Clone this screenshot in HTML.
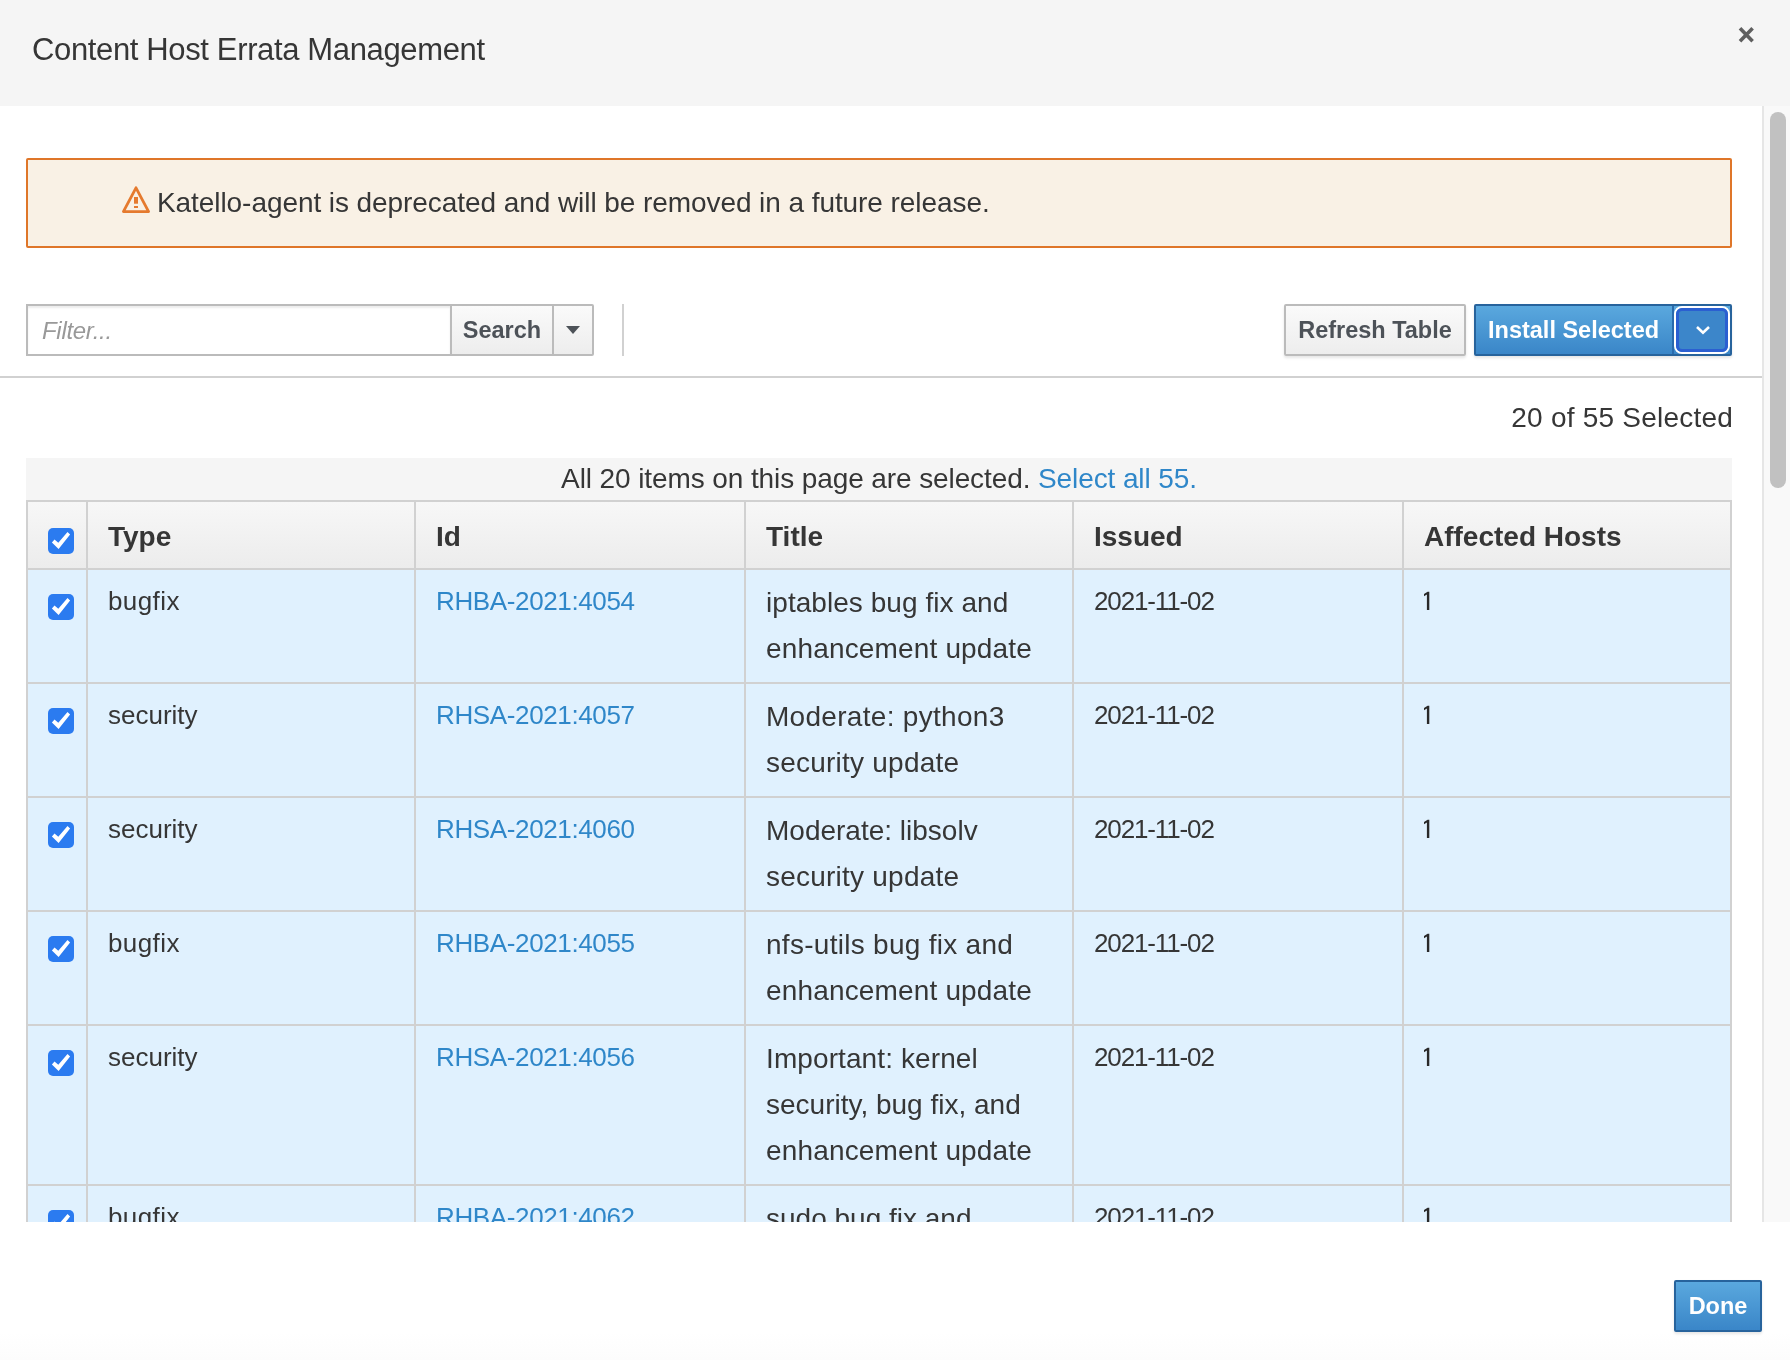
<!DOCTYPE html>
<html><head><meta charset="utf-8">
<style>
*{box-sizing:border-box;margin:0;padding:0}
html{background:#fff}
html,body{width:1790px;height:1360px;overflow:hidden;font-family:"Liberation Sans",sans-serif;color:#363636}
body{will-change:transform;position:relative}
.abs{position:absolute}
#hdr{left:0;top:0;width:1790px;height:106px;background:#f5f5f5}
#title{left:32px;top:30px;font-size:31px;letter-spacing:-0.36px;line-height:40px;color:#363636;white-space:nowrap}
#close{left:1736px;top:24px;width:20px;height:22px}
#body{left:0;top:106px;width:1762px;height:1116px;overflow:hidden;background:#fff}
#track{left:1762px;top:106px;width:28px;height:1116px;background:#f9f9f9;border-left:2px solid #e6e6e6}
#thumb{left:1770px;top:112px;width:16px;height:376px;background:#c1c1c1;border-radius:8px}
#foot{left:0;top:1222px;width:1790px;height:138px;background:linear-gradient(#fff 0,#fff 80%,#fcfcfc 100%)}
#alert{left:26px;top:52px;width:1706px;height:90px;border:2px solid #df7629;background:#f9f1e5;border-radius:2px}
#alert .txt{position:absolute;left:129px;top:27px;font-size:28px;line-height:32px;white-space:nowrap;color:#363636;letter-spacing:-0.07px}
#warn{position:absolute;left:93px;top:25px}
#filter{left:26px;top:198px;width:426px;height:52px;border:2px solid #bbb;background:#fff;box-shadow:inset 0 2px 2px rgba(0,0,0,.075)}
#filter span{position:absolute;left:14px;top:11px;font-style:italic;font-size:24px;line-height:28px;color:#999;letter-spacing:-0.3px}
.btn{position:absolute;border:2px solid #bbb;background:linear-gradient(#fafafa,#ededed);color:#4d5258;font-weight:bold;font-size:23.5px;line-height:48px;text-align:center;white-space:nowrap}
#search{left:450px;top:198px;width:104px;height:52px}
#caret{left:552px;top:198px;width:42px;height:52px;border-radius:0 2px 2px 0}
#vdiv{left:622px;top:198px;width:2px;height:52px;background:#d1d1d1}
#refresh{left:1284px;top:198px;width:182px;height:52px;border-radius:2px;box-shadow:0 2px 3px rgba(3,3,3,.1)}
#install{left:1474px;top:198px;width:258px;height:52px;border:2px solid #27639c;background:linear-gradient(#5aa8de,#3a86c8);color:#fff;border-radius:2px;text-align:left;box-shadow:0 2px 3px rgba(3,3,3,.1)}
#install .t{position:absolute;left:12px;top:0}
#install .sep{position:absolute;left:196px;top:0;width:2px;height:48px;background:#2a6aac}
#install .ring{position:absolute;left:198px;top:0px;width:56px;height:48px;border:2px solid #fff;border-radius:8px}
#install .ring2{position:absolute;left:200px;top:2px;width:52px;height:44px;border:3px solid #2b5fd1;border-radius:6px;background:#3c86ca}
#hr{left:0;top:270px;width:1762px;height:2px;background:#d1d1d1}
#count{left:1400px;top:296px;width:1331px;font-size:28px;line-height:32px;text-align:right;white-space:nowrap}
#count{left:0;width:1733px;letter-spacing:0.22px}
#banner{left:26px;top:352px;width:1706px;height:42px;background:#f5f5f5;text-align:center;font-size:28px;line-height:42px;white-space:nowrap;letter-spacing:-0.1px}
#banner a{color:#2f87c9;text-decoration:none}
#tbl{left:26px;top:394px;width:1706px;border-collapse:collapse;table-layout:fixed}
#tbl td,#tbl th{border:2px solid #d1d1d1;vertical-align:top;text-align:left;padding:0 0 0 20px;font-size:28px}
#tbl th{height:68px;background:linear-gradient(#f7f7f7,#ececec);font-weight:bold;line-height:62px;padding-top:4px;color:#363636}
#tbl td{background:#e0f1fe;line-height:46px;padding-top:8px;padding-bottom:12px}
#tbl td.cb,#tbl th.cb{padding:0;position:relative}
.chk{position:absolute;left:20px;width:26px;height:26px;background:#2b7bf0;border-radius:5px}
.chk svg{position:absolute;left:0;top:0}
#tbl a{color:#2f87c9;text-decoration:none}
#tbl td.s{font-size:26px}
#tbl td.t{padding-top:10px;padding-bottom:10px}
#tbl td .id{letter-spacing:-0.37px}
#tbl td .dt{letter-spacing:-1.13px}
</style></head><body>
<div id="hdr" class="abs"></div>
<div id="title" class="abs">Content Host Errata Management</div>
<svg id="close" class="abs" viewBox="0 0 20 22"><path d="M4 4.2 L16.6 17.2 M16.6 4.2 L4 17.2" stroke="#5f5f5f" stroke-width="3.6" stroke-linecap="butt"/></svg>

<div id="body" class="abs">
  <div id="alert" class="abs">
    <svg id="warn" width="30" height="30" viewBox="0 0 30 30"><path d="M15 2.8 L27.6 26.6 L2.4 26.6 Z" fill="none" stroke="#e57a2e" stroke-width="2.8" stroke-linejoin="round"/><rect x="13" y="12" width="4" height="6.7" fill="#e57a2e"/><rect x="13" y="21" width="4" height="2" fill="#e57a2e"/></svg>
    <div class="txt">Katello-agent is deprecated and will be removed in a future release.</div>
  </div>
  <div id="filter" class="abs"><span>Filter...</span></div>
  <div id="search" class="btn">Search</div>
  <div id="caret" class="btn"><svg style="position:absolute;left:11px;top:20px" width="16" height="10" viewBox="0 0 16 10"><path d="M1 0 L15 0 L8 8 Z" fill="#4d5258"/></svg></div>
  <div id="vdiv" class="abs"></div>
  <div id="refresh" class="btn">Refresh Table</div>
  <div id="install" class="btn"><span class="t">Install Selected</span><span class="sep"></span><span class="ring"></span><span class="ring2"></span><svg style="position:absolute;left:219px;top:19px" width="16" height="10" viewBox="0 0 16 10"><path d="M2 2 L8 7.6 L14 2" fill="none" stroke="#fff" stroke-width="2.6"/></svg></div>
  <div id="hr" class="abs"></div>
  <div id="count" class="abs">20 of 55 Selected</div>
  <div id="banner" class="abs">All 20 items on this page are selected. <a>Select all 55.</a></div>
  <table id="tbl" class="abs">
    <colgroup><col style="width:60px"><col style="width:328px"><col style="width:330px"><col style="width:328px"><col style="width:330px"><col style="width:328px"></colgroup>
    <tr><th class="cb"><span class="chk" style="top:26px"><svg width="26" height="26" viewBox="0 0 26 26"><path d="M3.9 14.5 L6.5 11.6 L10.3 14.8 L19.5 3.9 L22.1 6.6 L10.6 21 Z" fill="#fff"/></svg></span></th><th>Type</th><th>Id</th><th>Title</th><th>Issued</th><th>Affected Hosts</th></tr>
    <tr><td class="cb"><span class="chk" style="top:24px"><svg width="26" height="26" viewBox="0 0 26 26"><path d="M3.9 14.5 L6.5 11.6 L10.3 14.8 L19.5 3.9 L22.1 6.6 L10.6 21 Z" fill="#fff"/></svg></span></td><td class="s"><span style="letter-spacing:0.4px">bugfix</span></td><td class="s"><a class="id">RHBA-2021:4054</a></td><td class="t"><span style="letter-spacing:0.05px">iptables bug fix and</span><br><span style="letter-spacing:0.16px">enhancement update</span></td><td class="s"><span class="dt">2021-11-02</span></td><td class="s one"><svg width="10" height="20" viewBox="0 0 10 20" style="position:relative;left:-1px;top:13px;display:block"><path d="M1 3.1 L4.6 0.8 L6.3 0.8 L6.3 19 L3.9 19 L3.9 3.6 L1 5.3 Z" fill="#292929"/></svg></td></tr>
<tr><td class="cb"><span class="chk" style="top:24px"><svg width="26" height="26" viewBox="0 0 26 26"><path d="M3.9 14.5 L6.5 11.6 L10.3 14.8 L19.5 3.9 L22.1 6.6 L10.6 21 Z" fill="#fff"/></svg></span></td><td class="s">security</td><td class="s"><a class="id">RHSA-2021:4057</a></td><td class="t"><span style="letter-spacing:0.3px">Moderate: python3</span><br><span style="letter-spacing:0.23px">security update</span></td><td class="s"><span class="dt">2021-11-02</span></td><td class="s one"><svg width="10" height="20" viewBox="0 0 10 20" style="position:relative;left:-1px;top:13px;display:block"><path d="M1 3.1 L4.6 0.8 L6.3 0.8 L6.3 19 L3.9 19 L3.9 3.6 L1 5.3 Z" fill="#292929"/></svg></td></tr>
<tr><td class="cb"><span class="chk" style="top:24px"><svg width="26" height="26" viewBox="0 0 26 26"><path d="M3.9 14.5 L6.5 11.6 L10.3 14.8 L19.5 3.9 L22.1 6.6 L10.6 21 Z" fill="#fff"/></svg></span></td><td class="s">security</td><td class="s"><a class="id">RHSA-2021:4060</a></td><td class="t">Moderate: libsolv<br><span style="letter-spacing:0.23px">security update</span></td><td class="s"><span class="dt">2021-11-02</span></td><td class="s one"><svg width="10" height="20" viewBox="0 0 10 20" style="position:relative;left:-1px;top:13px;display:block"><path d="M1 3.1 L4.6 0.8 L6.3 0.8 L6.3 19 L3.9 19 L3.9 3.6 L1 5.3 Z" fill="#292929"/></svg></td></tr>
<tr><td class="cb"><span class="chk" style="top:24px"><svg width="26" height="26" viewBox="0 0 26 26"><path d="M3.9 14.5 L6.5 11.6 L10.3 14.8 L19.5 3.9 L22.1 6.6 L10.6 21 Z" fill="#fff"/></svg></span></td><td class="s"><span style="letter-spacing:0.4px">bugfix</span></td><td class="s"><a class="id">RHBA-2021:4055</a></td><td class="t"><span style="letter-spacing:0.28px">nfs-utils bug fix and</span><br><span style="letter-spacing:0.16px">enhancement update</span></td><td class="s"><span class="dt">2021-11-02</span></td><td class="s one"><svg width="10" height="20" viewBox="0 0 10 20" style="position:relative;left:-1px;top:13px;display:block"><path d="M1 3.1 L4.6 0.8 L6.3 0.8 L6.3 19 L3.9 19 L3.9 3.6 L1 5.3 Z" fill="#292929"/></svg></td></tr>
<tr><td class="cb"><span class="chk" style="top:24px"><svg width="26" height="26" viewBox="0 0 26 26"><path d="M3.9 14.5 L6.5 11.6 L10.3 14.8 L19.5 3.9 L22.1 6.6 L10.6 21 Z" fill="#fff"/></svg></span></td><td class="s">security</td><td class="s"><a class="id">RHSA-2021:4056</a></td><td class="t"><span style="letter-spacing:0.1px">Important: kernel</span><br>security, bug fix, and<br><span style="letter-spacing:0.16px">enhancement update</span></td><td class="s"><span class="dt">2021-11-02</span></td><td class="s one"><svg width="10" height="20" viewBox="0 0 10 20" style="position:relative;left:-1px;top:13px;display:block"><path d="M1 3.1 L4.6 0.8 L6.3 0.8 L6.3 19 L3.9 19 L3.9 3.6 L1 5.3 Z" fill="#292929"/></svg></td></tr>
<tr><td class="cb"><span class="chk" style="top:24px"><svg width="26" height="26" viewBox="0 0 26 26"><path d="M3.9 14.5 L6.5 11.6 L10.3 14.8 L19.5 3.9 L22.1 6.6 L10.6 21 Z" fill="#fff"/></svg></span></td><td class="s"><span style="letter-spacing:0.4px">bugfix</span></td><td class="s"><a class="id">RHBA-2021:4062</a></td><td class="t">sudo bug fix and<br><span style="letter-spacing:0.16px">enhancement update</span></td><td class="s"><span class="dt">2021-11-02</span></td><td class="s one"><svg width="10" height="20" viewBox="0 0 10 20" style="position:relative;left:-1px;top:13px;display:block"><path d="M1 3.1 L4.6 0.8 L6.3 0.8 L6.3 19 L3.9 19 L3.9 3.6 L1 5.3 Z" fill="#292929"/></svg></td></tr>
  </table>
</div>
<div id="track" class="abs"></div>
<div id="thumb" class="abs"></div>
<div id="foot" class="abs"></div>
<div id="done" class="btn" style="left:1674px;top:1280px;width:88px;height:52px;border:2px solid #27639c;background:linear-gradient(#5aa8de,#3a86c8);color:#fff;border-radius:2px;box-shadow:0 2px 3px rgba(3,3,3,.1)">Done</div>
</body></html>
